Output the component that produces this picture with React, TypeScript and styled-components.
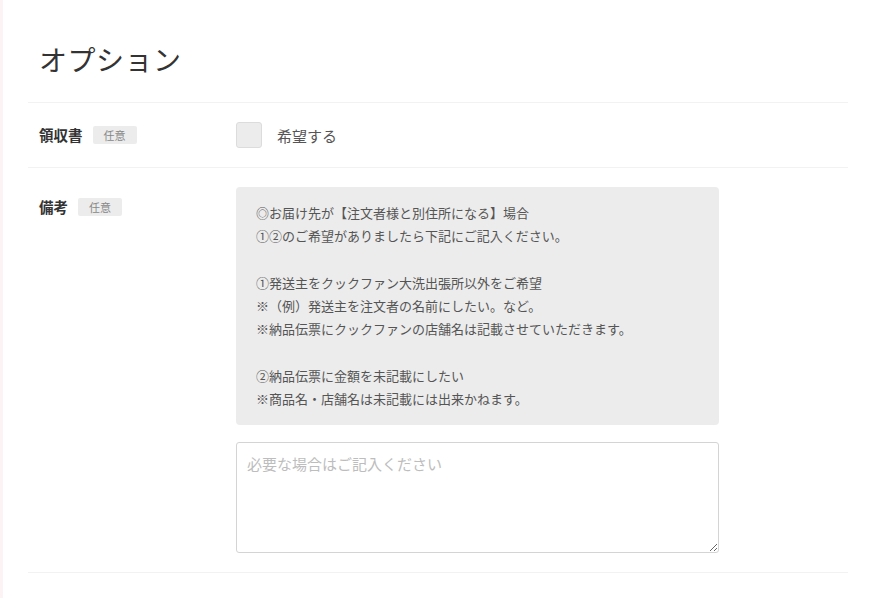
import React from 'react';
import styled, { createGlobalStyle } from 'styled-components';

const GlobalStyle = createGlobalStyle`
    html, body {
        margin: 0;
        padding: 0;
        background: #fff;
    }
    body {
        font-family: "Noto Sans CJK JP", "Noto Sans", sans-serif;
        color: #333;
        border-left: 3px solid #fbf3f4;
        min-height: 598px;
        box-sizing: border-box;
    }
`;

const Page = styled.div`
    padding: 0 26px 0 25px;
`;

const Title = styled.h2`
    margin: 0;
    padding: 41px 11px 25px;
    font-size: 28px;
    line-height: 36px;
    font-weight: 400;
    color: #333;
    letter-spacing: 0.5px;
`;

const Row = styled.div<{ $center?: boolean }>`
    display: flex;
    align-items: ${(p) => (p.$center ? 'center' : 'flex-start')};
    border-top: 1px solid #f2f2f2;
    padding: 19px 0;
    &:last-child {
        border-bottom: 1px solid #f2f2f2;
    }
`;

const LabelCol = styled.div<{ $offset?: number }>`
    width: 208px;
    flex-shrink: 0;
    display: flex;
    align-items: center;
    gap: 10px;
    padding-left: 11px;
    box-sizing: border-box;
    margin-top: ${(p) => p.$offset || 0}px;
`;

const Label = styled.span`
    font-size: 14.5px;
    font-weight: 700;
    line-height: 20px;
    color: #333;
`;

const Badge = styled.span`
    display: inline-block;
    background: #ececec;
    color: #888;
    font-size: 11px;
    line-height: 18px;
    padding: 0 11px;
    border-radius: 2px;
`;

const Field = styled.div`
    flex: 0 0 483px;
    display: flex;
    flex-direction: column;
`;

const CheckLine = styled.label`
    display: flex;
    align-items: center;
    gap: 15px;
    font-size: 15px;
    color: #555;
`;

const CheckBox = styled.span`
    width: 26px;
    height: 26px;
    box-sizing: border-box;
    background: #ececec;
    border: 1px solid #dcdcdc;
    border-radius: 3px;
`;

const Notice = styled.div`
    background: #ececec;
    border-radius: 4px;
    padding: 14px 20px;
    font-size: 13px;
    line-height: 23.3px;
    color: #555;
    white-space: pre-line;
`;

const Memo = styled.textarea`
    margin-top: 17px;
    height: 111px;
    box-sizing: border-box;
    border: 1px solid #d4d4d4;
    border-radius: 3px;
    padding: 10px 10px;
    font-family: "Noto Sans CJK JP", "Noto Sans", sans-serif;
    font-size: 15px;
    line-height: 22px;
    color: #555;
    &::placeholder {
        color: #bdbdbd;
    }
`;

const noticeText = `◎お届け先が【注文者様と別住所になる】場合
①②のご希望がありましたら下記にご記入ください。

①発送主をクックファン大洗出張所以外をご希望
※（例）発送主を注文者の名前にしたい。など。
※納品伝票にクックファンの店舗名は記載させていただきます。

②納品伝票に金額を未記載にしたい
※商品名・店舗名は未記載には出来かねます。`;

const App: React.FC = () => {
    return (
        <>
            <GlobalStyle />
            <Page>
                <Title>オプション</Title>
                <div>
                    <Row $center>
                        <LabelCol>
                            <Label>領収書</Label>
                            <Badge>任意</Badge>
                        </LabelCol>
                        <Field>
                            <CheckLine>
                                <CheckBox />
                                希望する
                            </CheckLine>
                        </Field>
                    </Row>
                    <Row>
                        <LabelCol $offset={10}>
                            <Label>備考</Label>
                            <Badge>任意</Badge>
                        </LabelCol>
                        <Field>
                            <Notice>{noticeText}</Notice>
                            <Memo placeholder="必要な場合はご記入ください" />
                        </Field>
                    </Row>
                </div>
            </Page>
        </>
    );
};

export default App;
